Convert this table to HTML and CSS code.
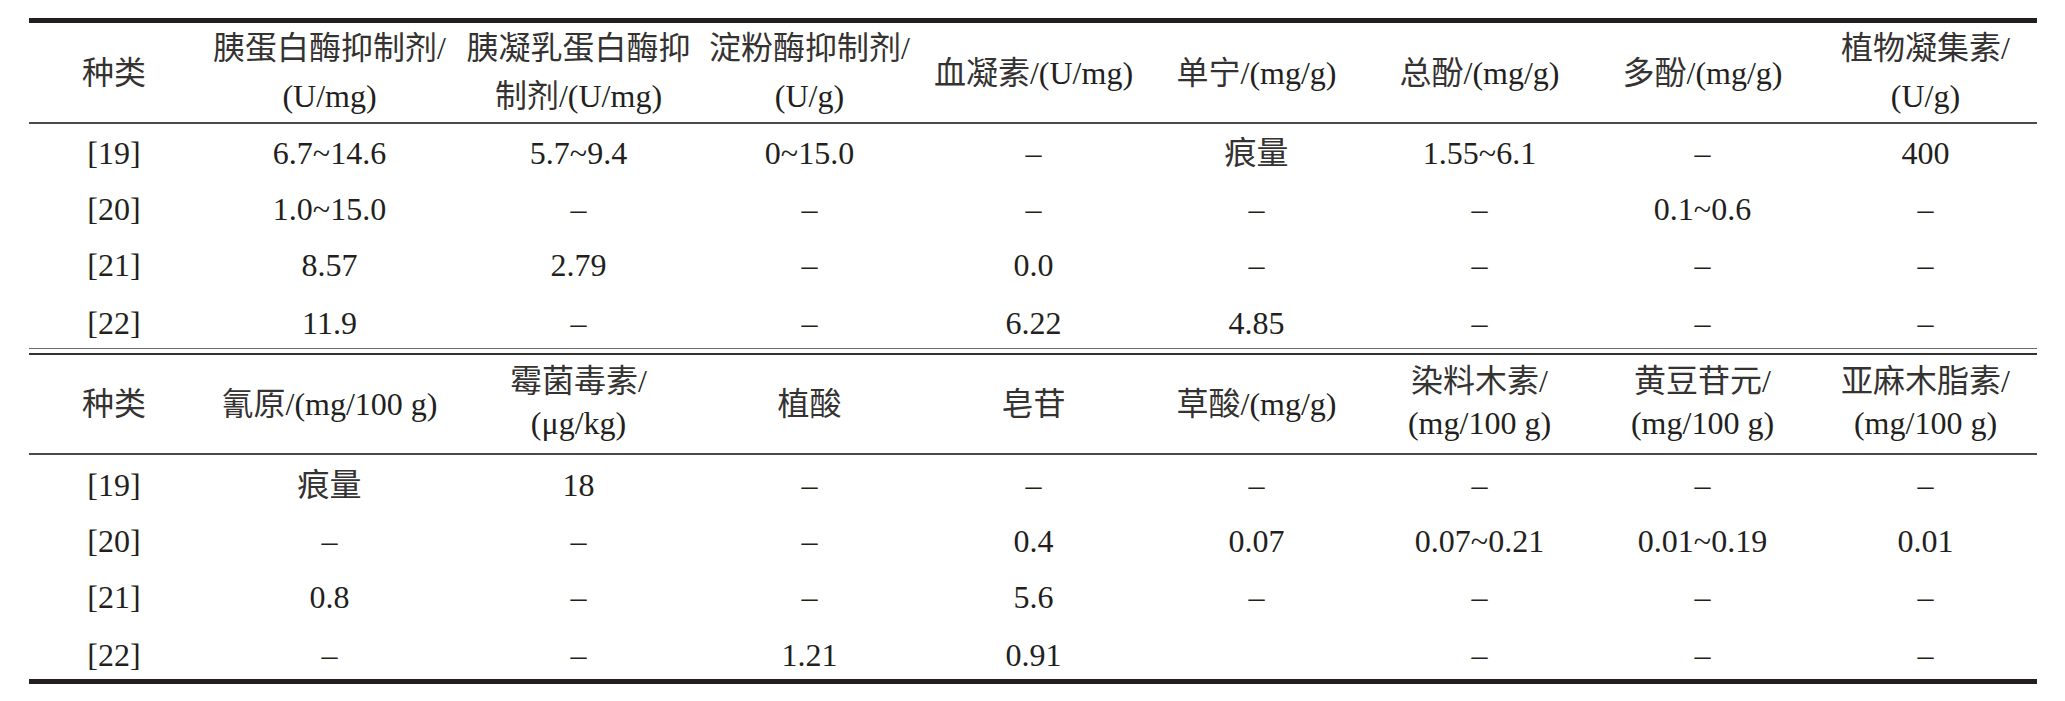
FILE: index.html
```html
<!DOCTYPE html>
<html lang="zh">
<head>
<meta charset="utf-8">
<title>抗营养因子含量</title>
<link rel="stylesheet" href="styles.css">
</head>
<body>
<table class="tbl">
  <colgroup>
    <col class="c1"><col class="c2"><col class="c3"><col class="c4"><col class="c5"><col class="c6"><col class="c7"><col class="c8"><col class="c9">
  </colgroup>
  <thead>
    <tr class="h1">
      <th><span class="zh">种类</span></th>
      <th class="two"><span class="zh">胰蛋白酶抑制剂</span>/<br>(U/mg)</th>
      <th class="two"><span class="zh">胰凝乳蛋白酶抑</span><br><span class="zh">制剂</span>/(U/mg)</th>
      <th class="two"><span class="zh">淀粉酶抑制剂</span>/<br>(U/g)</th>
      <th><span class="zh">血凝素</span>/(U/mg)</th>
      <th><span class="zh">单宁</span>/(mg/g)</th>
      <th><span class="zh">总酚</span>/(mg/g)</th>
      <th><span class="zh">多酚</span>/(mg/g)</th>
      <th class="two"><span class="zh">植物凝集素</span>/<br>(U/g)</th>
    </tr>
  </thead>
  <tbody class="b1">
    <tr class="first">
      <td>[19]</td><td>6.7~14.6</td><td>5.7~9.4</td><td>0~15.0</td><td>–</td><td><span class="zh">痕量</span></td><td>1.55~6.1</td><td>–</td><td>400</td>
    </tr>
    <tr>
      <td>[20]</td><td>1.0~15.0</td><td>–</td><td>–</td><td>–</td><td>–</td><td>–</td><td>0.1~0.6</td><td>–</td>
    </tr>
    <tr>
      <td>[21]</td><td>8.57</td><td>2.79</td><td>–</td><td>0.0</td><td>–</td><td>–</td><td>–</td><td>–</td>
    </tr>
    <tr class="last">
      <td>[22]</td><td>11.9</td><td>–</td><td>–</td><td>6.22</td><td>4.85</td><td>–</td><td>–</td><td>–</td>
    </tr>
  </tbody>
  <tbody class="b2">
    <tr class="sep">
      <td></td><td></td><td></td><td></td><td></td><td></td><td></td><td></td><td></td>
    </tr>
    <tr class="h2">
      <th><span class="zh">种类</span></th>
      <th><span class="zh">氰原</span>/(mg/100 g)</th>
      <th class="two"><span class="zh">霉菌毒素</span>/<br>(μg/kg)</th>
      <th><span class="zh">植酸</span></th>
      <th><span class="zh">皂苷</span></th>
      <th><span class="zh">草酸</span>/(mg/g)</th>
      <th class="two"><span class="zh">染料木素</span>/<br>(mg/100 g)</th>
      <th class="two"><span class="zh">黄豆苷元</span>/<br>(mg/100 g)</th>
      <th class="two"><span class="zh">亚麻木脂素</span>/<br>(mg/100 g)</th>
    </tr>
    <tr class="first">
      <td>[19]</td><td><span class="zh">痕量</span></td><td>18</td><td>–</td><td>–</td><td>–</td><td>–</td><td>–</td><td>–</td>
    </tr>
    <tr>
      <td>[20]</td><td>–</td><td>–</td><td>–</td><td>0.4</td><td>0.07</td><td>0.07~0.21</td><td>0.01~0.19</td><td>0.01</td>
    </tr>
    <tr>
      <td>[21]</td><td>0.8</td><td>–</td><td>–</td><td>5.6</td><td>–</td><td>–</td><td>–</td><td>–</td>
    </tr>
    <tr class="last">
      <td>[22]</td><td>–</td><td>–</td><td>1.21</td><td>0.91</td><td></td><td>–</td><td>–</td><td>–</td>
    </tr>
  </tbody>
</table>
</body>
</html>
```

FILE: styles.css
```css
html, body {
  margin: 0;
  padding: 0;
  background: #ffffff;
}

.tbl {
  margin: 18px 0 0 29px;
  width: 2008px;
  table-layout: fixed;
  border-collapse: separate;
  border-spacing: 0;
  border-top: 5px solid #231f20;
  border-bottom: 5px solid #231f20;
  font-family: "Liberation Serif", "Noto Sans CJK SC", serif;
  font-size: 32px;
  color: #231f20;
}

.c1 { width: 170px; }
.c2 { width: 261px; }
.c3 { width: 237px; }
.c4 { width: 225px; }
.c5 { width: 223px; }
.c6 { width: 223px; }
.c7 { width: 223px; }
.c8 { width: 223px; }
.c9 { width: 223px; }

.zh {
  font-family: "Noto Sans CJK SC", "Liberation Serif", sans-serif;
  font-size: 32px;
  line-height: 1;
  color: #353232;
}

.tbl th,
.tbl td {
  padding: 0;
  text-align: center;
  vertical-align: middle;
  white-space: nowrap;
  font-weight: normal;
}

/* header rows */
.h1 th {
  line-height: 48px;
  border-bottom: 2px solid #4a4a4a;
}
.h1 th.two {
  padding: 1px 0 2px;
}

.h2 th {
  line-height: 42px;
  border-bottom: 2px solid #4a4a4a;
}
.h2 th.two {
  padding: 5px 0 9px;
}

/* body rows */
.tbl td {
  line-height: 56px;
}
.b1 .first td { padding-top: 1px; }
.b1 .last td { padding-top: 5px; line-height: 50px; }
.b2 .first td { padding-top: 2px; }
.b2 .last td { padding-top: 6px; line-height: 48px; }

/* double rule between the two blocks */
.tbl .sep td {
  padding: 4px 0 0;
  line-height: 0;
  font-size: 0;
  border-top: 1px solid #6b6b6b;
  border-bottom: 2px solid #333333;
}
```
